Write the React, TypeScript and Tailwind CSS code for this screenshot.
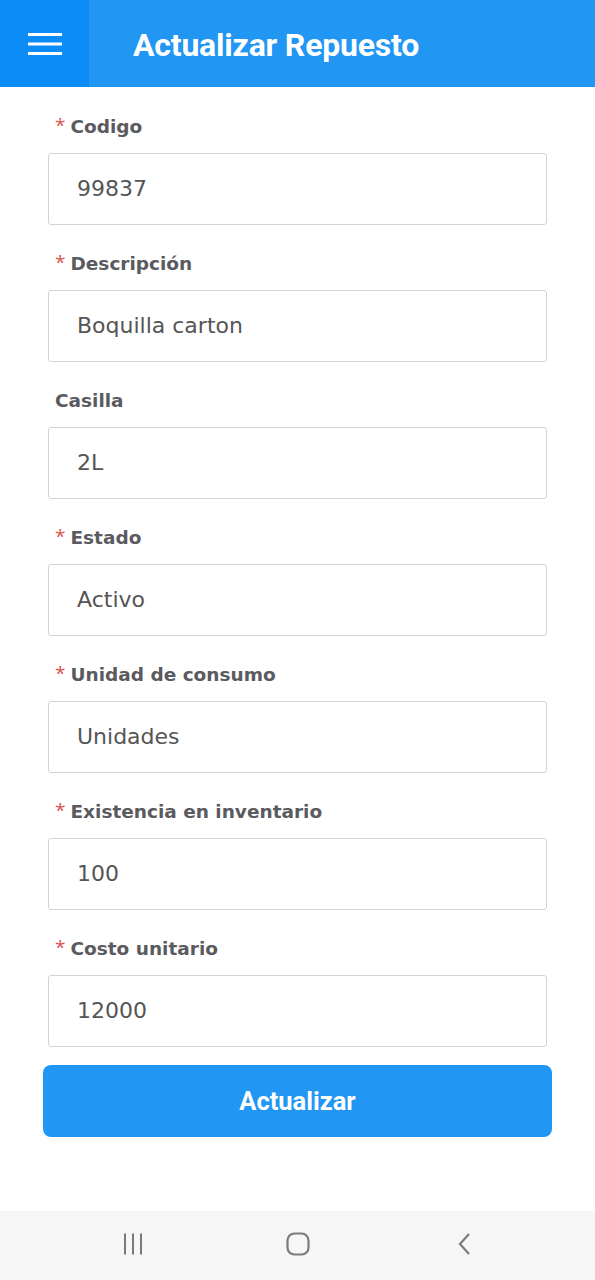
import React from 'react';

interface Field {
  label: string;
  value: string;
  required: boolean;
}

const fields: Field[] = [
  { label: 'Codigo', value: '99837', required: true },
  { label: 'Descripción', value: 'Boquilla carton', required: true },
  { label: 'Casilla', value: '2L', required: false },
  { label: 'Estado', value: 'Activo', required: true },
  { label: 'Unidad de consumo', value: 'Unidades', required: true },
  { label: 'Existencia en inventario', value: '100', required: true },
  { label: 'Costo unitario', value: '12000', required: true },
];

const formFont = { fontFamily: '"DejaVu Sans", "Open Sans", sans-serif' };
const starFont = { fontFamily: '"Open Sans", sans-serif' };

export default function App() {
  return (
    <div className="w-[595px] h-[1280px] flex flex-col bg-white" style={{ fontFamily: 'Roboto, "Liberation Sans", sans-serif' }}>
      {/* Top bar */}
      <header className="h-[87px] flex items-stretch bg-[#2196f3]">
        <button className="w-[89px] bg-[#0b8cf6] flex items-center justify-center">
          <svg width="34" height="24" viewBox="0 0 34 24">
            <rect x="0" y="1" width="34" height="3" fill="white" />
            <rect x="0" y="10.5" width="34" height="3" fill="white" />
            <rect x="0" y="20" width="34" height="3" fill="white" />
          </svg>
        </button>
        <h1 className="flex items-center pl-[44px] pt-[2px] text-[32px] font-bold text-white tracking-[-0.2px]">
          Actualizar Repuesto
        </h1>
      </header>

      {/* Form */}
      <main className="flex-1 flex flex-col pt-[26px]">
        {fields.map((f) => (
          <div key={f.label} className="flex flex-col px-[48px] mb-[25px]">
            <label className="h-[27px] flex items-center pl-[7px] text-[18.5px] font-bold text-[#5a5a5f] mb-[13px]" style={formFont}>
              {f.required && (
                <span className="text-[#d9534f] text-[19px] font-normal mr-[5px] -mt-[3px]" style={starFont}>
                  *
                </span>
              )}
              {f.label}
            </label>
            <div className="h-[72px] border border-[#d3d3d3] rounded-[3px] flex items-center pl-[28px] pb-[2px] text-[22px] text-[#555555]" style={formFont}>
              {f.value}
            </div>
          </div>
        ))}
        <div className="px-[43px] -mt-[7px]">
          <button className="w-full h-[72px] rounded-[8px] bg-[#2196f3] text-white text-[25.5px] font-bold">
            Actualizar
          </button>
        </div>
      </main>

      {/* System navigation bar */}
      <nav className="h-[69px] bg-[#f6f6f6] flex items-center justify-between px-[121px] pb-[3px]">
        <svg width="24" height="24" viewBox="0 0 24 24">
          <rect x="3" y="1.5" width="2" height="21" fill="#7a7a7a" />
          <rect x="11" y="1.5" width="2" height="21" fill="#7a7a7a" />
          <rect x="19" y="1.5" width="2" height="21" fill="#7a7a7a" />
        </svg>
        <svg width="24" height="24" viewBox="0 0 24 24">
          <rect x="1.5" y="1.5" width="21" height="21" rx="7" fill="none" stroke="#7a7a7a" strokeWidth="2.2" />
        </svg>
        <svg width="24" height="24" viewBox="0 0 24 24">
          <path d="M19 2 L10 12 L19 22" fill="none" stroke="#7a7a7a" strokeWidth="2.2" />
        </svg>
      </nav>
    </div>
  );
}
